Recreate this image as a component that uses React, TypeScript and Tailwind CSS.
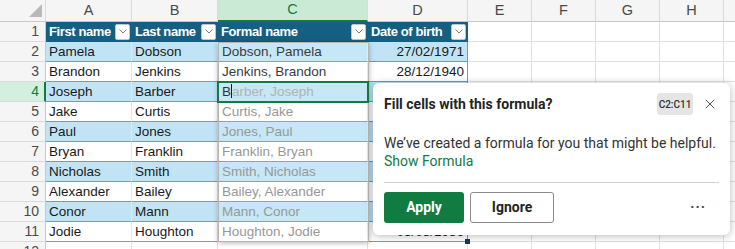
import { X } from "lucide-react";

const COL_W = [46, 86, 86, 150, 100, 64, 64, 64, 64, 64];
const LETTERS = ["A", "B", "C", "D", "E", "F", "G", "H", "I"];

const PEOPLE = [
  ["Pamela", "Dobson", "Dobson, Pamela", "27/02/1971"],
  ["Brandon", "Jenkins", "Jenkins, Brandon", "28/12/1940"],
  ["Joseph", "Barber", "Barber, Joseph", ""],
  ["Jake", "Curtis", "Curtis, Jake", ""],
  ["Paul", "Jones", "Jones, Paul", ""],
  ["Bryan", "Franklin", "Franklin, Bryan", ""],
  ["Nicholas", "Smith", "Smith, Nicholas", ""],
  ["Alexander", "Bailey", "Bailey, Alexander", ""],
  ["Conor", "Mann", "Mann, Conor", ""],
  ["Jodie", "Houghton", "Houghton, Jodie", "03/08/1986"],
];

const HEADERS = ["First name", "Last name", "Formal name", "Date of birth"];

function Chevron() {
  return (
    <svg width="8" height="5" viewBox="0 0 8 5" fill="none">
      <polyline points="0.5,0.5 4,4 7.5,0.5" stroke="#7a7a7a" strokeWidth="1" />
    </svg>
  );
}

function FilterButton() {
  return (
    <span className="ml-auto mr-[2px] flex h-[16px] w-[15px] shrink-0 items-center justify-center rounded-[2px] border border-[#c4c4c4] bg-white">
      <Chevron />
    </span>
  );
}

function ColumnHeaders() {
  return (
    <>
      <div className="relative h-[22px] border-b border-r border-b-[#c8c8c8] border-r-[#dadada] bg-[#f5f5f5]">
        <svg className="absolute right-[3px] bottom-[4px]" width="13" height="13" viewBox="0 0 13 13">
          <polygon points="13,0 13,13 0,13" fill="#b9b9b9" />
        </svg>
      </div>
      {LETTERS.map((l) =>
        l === "C" ? (
          <div
            key={l}
            className="flex h-[22px] items-center justify-center border-b-2 border-r border-b-[#107c41] border-r-[#dadada] bg-[#caead5] text-[14.5px] text-[#107c41]"
          >
            {l}
          </div>
        ) : (
          <div
            key={l}
            className="flex h-[22px] items-center justify-center border-b border-r border-b-[#c8c8c8] border-r-[#dadada] bg-[#f5f5f5] text-[14.5px] text-[#4a4a4a]"
          >
            {l === "I" ? "" : l}
          </div>
        ),
      )}
    </>
  );
}

function RowHeader({ n }: { n: number }) {
  if (n === 4) {
    return (
      <div className="h-[20px] border-b border-r-2 border-b-[#dadada] border-r-[#107c41] bg-[#d3efde] pr-[5px] text-right text-[14px] leading-[19px] text-[#107c41]">
        {n}
      </div>
    );
  }
  return (
    <div className="h-[20px] overflow-hidden border-b border-r border-b-[#dadada] border-r-[#c8c8c8] bg-[#f5f5f5] pr-[6px] text-right text-[14px] leading-[19px] text-[#4a4a4a]">
      {n}
    </div>
  );
}

function EmptyCells() {
  return (
    <>
      {[0, 1, 2, 3, 4].map((i) => (
        <div key={i} className="h-[20px] border-b border-r border-[#e1e1e1] bg-white" />
      ))}
    </>
  );
}

function HeaderRow() {
  return (
    <>
      <RowHeader n={1} />
      {HEADERS.map((h) => (
        <div
          key={h}
          className="flex h-[20px] items-center border-b border-b-[#156082] bg-[#156082] pl-[3px] text-[13px] font-bold tracking-[-0.4px] text-white"
        >
          <span className="whitespace-nowrap">{h}</span>
          <FilterButton />
        </div>
      ))}
      <EmptyCells />
    </>
  );
}

function BodyRow({ idx }: { idx: number }) {
  const p = PEOPLE[idx];
  const n = idx + 2;
  const banded = idx % 2 === 0;
  const bg = banded ? "bg-[#c0e4f5]" : "bg-white";
  const innerR = banded ? "border-r-[#d6ecf7]" : "border-r-[#e4e4e4]";
  const formalColor = idx < 2 ? "text-[#262626]" : "text-[#8c8c8c]";
  return (
    <>
      <RowHeader n={n} />
      <div className={`h-[20px] truncate border-b border-r border-b-[#4fa9da] pl-[3px] text-[13.5px] leading-[19px] text-[#1a1a1a] ${bg} ${innerR}`}>
        {p[0]}
      </div>
      <div className={`h-[20px] truncate border-b border-r border-b-[#4fa9da] pl-[3px] text-[13.5px] leading-[19px] text-[#1a1a1a] ${bg} ${innerR}`}>
        {p[1]}
      </div>
      <div className={`h-[20px] truncate border-b border-r border-b-[#4fa9da] pl-[4px] text-[13.5px] leading-[19px] ${bg} ${innerR} ${formalColor}`}>
        {idx === 2 ? (
          <>
            <span className="text-[#1a1a1a]">B</span>
            <span className="inline-block h-[14px] w-px translate-y-[2px] bg-black" />
            <span className="text-[#a9a9a9]">arber, Joseph</span>
          </>
        ) : (
          p[2]
        )}
      </div>
      <div className={`relative h-[20px] border-b border-r border-b-[#4fa9da] border-r-[#4fa9da] pr-[3px] text-right text-[13.5px] leading-[19px] text-[#1a1a1a] ${bg}`}>
        {p[3]}
        {idx === 9 && <span className="absolute -right-[3px] -bottom-[3px] h-[5px] w-[5px] bg-[#1f3552]" />}
      </div>
      <EmptyCells />
    </>
  );
}

function FillPopup() {
  return (
    <div className="absolute left-[373px] top-[83px] flex h-[152px] w-[357px] flex-col rounded-[6px] bg-white px-[11px] pt-[10px] pb-[12px] font-['Roboto',sans-serif] shadow-[0_1px_8px_rgba(0,0,0,0.28)]">
      <div className="flex h-[22px] items-center">
        <span className="text-[14px] font-bold text-[#242424]">Fill cells with this formula?</span>
        <span className="ml-auto flex h-[22px] w-[36px] items-center justify-center rounded-[3px] bg-[#e5e5e5] text-[10px] font-medium text-[#333]">
          C2:C11
        </span>
        <X className="ml-[9px] mr-[1px] h-[16px] w-[16px] text-[#444]" strokeWidth={1.4} />
      </div>
      <p className="mt-[19px] text-[14px] leading-[18px] text-[#333]">
        We’ve created a formula for you that might be helpful.
      </p>
      <p className="text-[14px] leading-[18px] text-[#107c41]">Show Formula</p>
      <div className="mt-[12px] h-px bg-[#d2d2d2]" />
      <div className="mt-[9px] flex items-center">
        <button className="h-[31px] w-[80px] rounded-[3px] bg-[#107c41] text-[14px] font-bold text-white">Apply</button>
        <button className="ml-[6px] h-[31px] w-[84px] rounded-[3px] border border-[#8a8a8a] bg-white text-[14px] font-bold text-[#242424]">
          Ignore
        </button>
        <span className="ml-auto mr-[13px] text-[14px] font-bold tracking-[1px] text-[#444]">···</span>
      </div>
    </div>
  );
}

export default function App() {
  return (
    <div className="relative h-[249px] w-[735px] overflow-hidden bg-white font-['Liberation_Sans',Arial,sans-serif]">
      <div
        className="grid"
        style={{ gridTemplateColumns: COL_W.map((w) => `${w}px`).join(" ") }}
      >
        <ColumnHeaders />
        <HeaderRow />
        {PEOPLE.map((_, i) => (
          <BodyRow key={i} idx={i} />
        ))}
        <RowHeader n={12} />
        {[0, 1, 2, 3, 4, 5, 6, 7, 8].map((i) => (
          <div key={i} className="h-[20px] border-b border-r border-[#e1e1e1] bg-white" />
        ))}
      </div>

      {/* fill preview over column C */}
      <div className="pointer-events-none absolute left-[218px] top-[42px] h-[200px] w-[151px] border border-[#b5b5b5] bg-white/10 shadow-[0_1px_5px_rgba(0,0,0,0.3)]" />
      {/* active cell C4 */}
      <div className="pointer-events-none absolute left-[217px] top-[81px] h-[22px] w-[152px] border-2 border-[#107c41]" />

      <FillPopup />
    </div>
  );
}
